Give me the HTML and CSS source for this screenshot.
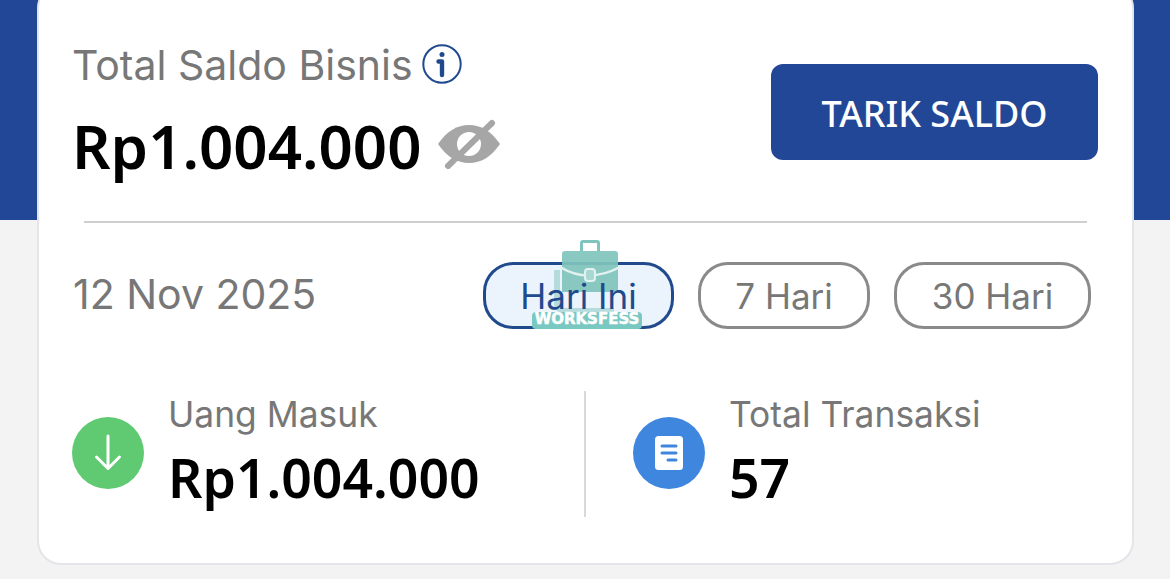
FILE: index.html

```html
<!DOCTYPE html>
<html lang="id">
<head>
  <meta charset="UTF-8" />
  <title>Total Saldo Bisnis</title>
  <link rel="stylesheet" href="styles.css">
</head>
<body>
  <main class="card">
    <section class="saldo">
      <div>
        <div class="saldo-label">
          <span>Total Saldo Bisnis</span>
          <svg class="info" viewBox="0 0 40 40" width="40" height="40">
            <circle cx="20" cy="20" r="18.7" fill="none" stroke="#214a8c" stroke-width="2"/>
            <circle cx="20" cy="10.5" r="2.5" fill="#214a8c"/>
            <path d="M16.5 17.5H20V31" fill="none" stroke="#214a8c" stroke-width="4.4" stroke-linejoin="round" stroke-linecap="round"/>
          </svg>
        </div>
        <div class="saldo-value">
          <span>Rp1.004.000</span>
          <svg class="eye" viewBox="0 0 62 50" width="62" height="50">
            <path d="M0 25C9 12 19 6 31 6S53 12 62 25C53 38 43 44 31 44S9 38 0 25Z" fill="#a6a6a6"/>
            <circle cx="31" cy="25" r="12" fill="#fff"/>
            <path d="M10 47L54 4" stroke="#a6a6a6" stroke-width="6" stroke-linecap="round"/>
          </svg>
        </div>
      </div>
      <button class="tarik">TARIK SALDO</button>
    </section>

    <hr class="line" />

    <section class="periode">
      <span class="tanggal">12 Nov 2025</span>
      <div class="pills">
        <span class="pill pill-on"><span class="pill-text">Hari Ini</span></span>
        <span class="pill pill-7"><span class="pill-text">7 Hari</span></span>
        <span class="pill pill-30"><span class="pill-text">30 Hari</span></span>
      </div>
      <div class="watermark">
        <svg viewBox="0 0 110 89" width="110" height="89">
          <path d="M25 30V62Q25 71 34 71H82" fill="none" stroke="#80c4bc" stroke-width="6" opacity=".5"/>
          <path d="M49.500 11V3Q49.500 1.500 51 1.500H65Q66.500 1.500 66.500 3V11" fill="none" stroke="#7fc4bd" stroke-width="3"/>
          <path d="M33 11H83Q86 11 86 14V52H30V14Q30 11 33 11Z" fill="#80c4bc" opacity=".92"/>
          <path d="M28 27Q56 44 88 27" fill="none" stroke="#e2f2f0" stroke-width="2.500"/>
          <rect x="53" y="29" width="10" height="12" rx="3" fill="#a9d8d2" stroke="#e2f2f0" stroke-width="2"/>
        </svg>
        <span class="watermark-text">WORKSFESS</span>
      </div>
    </section>

    <section class="stats">
      <div class="stat stat-masuk">
        <span class="bulat bulat-hijau">
          <svg viewBox="0 0 72 72" width="72" height="72">
            <path d="M36 19V51M24.500 40L36 51.500L47.500 40" fill="none" stroke="#fff" stroke-width="3" stroke-linecap="round" stroke-linejoin="round"/>
          </svg>
        </span>
        <div class="stat-text">
          <div class="stat-label">Uang Masuk</div>
          <div class="stat-value">Rp1.004.000</div>
        </div>
      </div>
      <div class="stat stat-transaksi">
        <span class="bulat bulat-biru">
          <svg viewBox="0 0 72 72" width="72" height="72">
            <rect x="22" y="19" width="28" height="34" rx="3.500" fill="#fff"/>
            <path d="M29 29H43M29 36H43M35 43H43" stroke="#3f86de" stroke-width="3" stroke-linecap="round"/>
          </svg>
        </span>
        <div class="stat-text">
          <div class="stat-label">Total Transaksi</div>
          <div class="stat-value">57</div>
        </div>
      </div>
    </section>
  </main>
</body>
</html>
```

FILE: styles.css

```css
* { box-sizing: border-box; }
html, body { height: 100%; }
body {
  margin: 0;
  overflow: hidden;
  font-family: "Inter", "Liberation Sans", sans-serif;
  background: linear-gradient(#214796 220px, #f3f3f3 220px);
}

.card {
  position: relative;
  width: 1097px;
  height: 581px;
  margin: -16px 0 0 37px;
  background: #fff;
  border: 2px solid #e3e5e9;
  border-radius: 24px;
}

.saldo {
  display: flex;
  justify-content: space-between;
  height: 235px;
  padding: 54px 34px 0 33px;
}
.saldo-label { display: flex; align-items: center; gap: 9px; height: 50px; color: #777; font-size: 41px; }
.saldo-value { display: flex; align-items: center; gap: 16px; height: 60px; margin-top: 26px; color: #000; font-family: "Noto Sans", sans-serif; font-size: 60px; font-weight: 600; }
.info { display: block; margin-top: -2px; }
.eye { display: block; margin-top: -4px; }

.tarik {
  width: 327px;
  height: 96px;
  margin-top: 24px;
  padding: 2px 0 0;
  border: 0;
  border-radius: 12px;
  background: #214796;
  color: #fff;
  font-family: "Noto Sans", sans-serif;
  font-size: 36px;
  font-weight: 500;
}

.line { height: 2px; margin: 0 45px 0 45px; border: 0; background: #cfcfcf; }

.periode {
  position: relative;
  display: flex;
  justify-content: space-between;
  align-items: center;
  height: 67px;
  margin-top: 39px;
  padding: 0 41px 0 34px;
}
.tanggal { color: #777; font-size: 41px; margin-top: -4px; }
.pills { display: flex; gap: 24px; }
.pill {
  display: flex;
  justify-content: center;
  align-items: center;
  height: 67px;
  border: 3px solid #8a8a8a;
  border-radius: 30px;
  color: #777;
  font-size: 35px;
}
.pill-text { position: relative; z-index: 2; line-height: 32px; }
.pill-on { width: 191px; border-color: #214a8c; background: #ebf3fc; color: #214a8c; }
.pill-7 { width: 172px; }
.pill-30 { width: 197px; }

.watermark {
  position: absolute;
  z-index: 1;
  left: 493px;
  top: -22px;
  width: 110px;
  height: 89px;
  pointer-events: none;
}
.watermark svg { display: block; }
.watermark-text {
  position: absolute;
  left: 0;
  bottom: 0;
  width: 110px;
  height: 17px;
  border-radius: 4px;
  background: #79c9c2;
  color: #fff;
  font-family: "DejaVu Sans", sans-serif;
  font-size: 15px;
  font-weight: 700;
  line-height: 15px;
  text-align: center;
  -webkit-text-stroke: .5px #fff;
}

.stats { display: flex; margin-top: 62px; height: 126px; padding-left: 33px; }
.stat { display: flex; align-items: center; gap: 24px; }
.stat-masuk { width: 514px; border-right: 2px solid #d9d9d9; }
.stat-transaksi { padding-left: 47px; }
.bulat { display: block; width: 72px; height: 72px; margin-top: -2px; border-radius: 50%; flex: none; }
.bulat svg { display: block; }
.bulat-hijau { background: #5fca72; }
.bulat-biru { background: #3f86de; }
.stat-text { margin-bottom: 4px; }
.stat-label { color: #777; font-size: 35.400px; line-height: 44px; }
.stat-value { margin-top: 8px; color: #000; font-family: "Noto Sans", sans-serif; font-size: 53.500px; font-weight: 600; line-height: 66px; }
```
